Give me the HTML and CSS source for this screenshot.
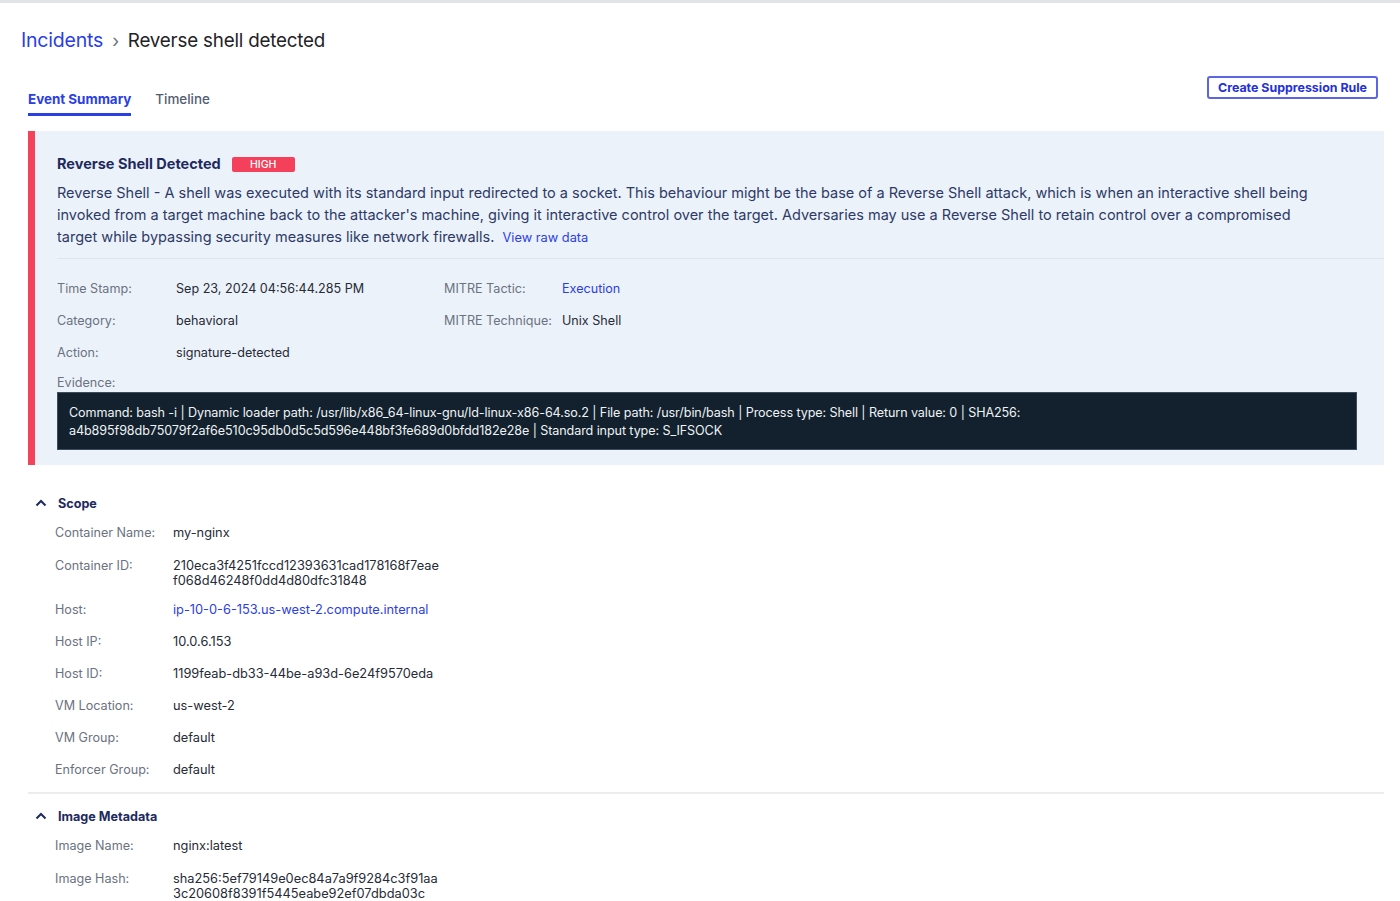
FILE: index.html
```html
<!DOCTYPE html>
<html>
  <head>
    <title>Reverse shell detected</title>
    <link rel="stylesheet" href="styles.css">
  </head>
  <body>
    <div class="page">
      <div class="breadcrumb">
        <a class="crumb-link" href="#">Incidents</a>
        <span class="crumb-sep">&rsaquo;</span>
        <span class="crumb-current">Reverse shell detected</span>
      </div>

      <div class="tabs-row">
        <div class="tabs">
          <div class="tab active">Event Summary</div>
          <div class="tab">Timeline</div>
        </div>
        <button class="outline-button">Create Suppression Rule</button>
      </div>

      <div class="alert">
        <div class="alert-title">
          Reverse Shell Detected
          <span class="badge-high">HIGH</span>
        </div>
        <p class="alert-desc">
          Reverse Shell - A shell was executed with its standard input redirected to a socket. This behaviour might be the base of a Reverse Shell attack, which is when an interactive shell being invoked from a target machine back to the attacker's machine, giving it interactive control over the target. Adversaries may use a Reverse Shell to retain control over a compromised target while bypassing security measures like network firewalls.
          <a class="raw-link" href="#">View raw data</a>
        </p>
        <div class="alert-divider"></div>

        <div class="details">
          <div class="label">Time Stamp:</div>
          <div class="value">Sep 23, 2024 04:56:44.285 PM</div>
          <div class="label">MITRE Tactic:</div>
          <div class="value link">Execution</div>

          <div class="label">Category:</div>
          <div class="value">behavioral</div>
          <div class="label">MITRE Technique:</div>
          <div class="value">Unix Shell</div>

          <div class="label">Action:</div>
          <div class="value">signature-detected</div>
          <div></div>
          <div></div>
        </div>

        <div class="evidence-label">Evidence:</div>
        <div class="evidence">
          Command: bash -i | Dynamic loader path: /usr/lib/x86_64-linux-gnu/ld-linux-x86-64.so.2 | File path: /usr/bin/bash | Process type: Shell | Return value: 0 | SHA256: a4b895f98db75079f2af6e510c95db0d5c5d596e448bf3fe689d0bfdd182e28e | Standard input type: S_IFSOCK
        </div>
      </div>

      <div class="section first">
        <div class="section-head">
          <svg class="chevron" width="12" height="8" viewBox="0 0 12 8"><path d="M1.5 6.5 L6 2 L10.5 6.5" fill="none" stroke="#1e2a5e" stroke-width="2"/></svg>
          <span>Scope</span>
        </div>
        <div class="rows">
          <div class="row"><div class="row-label">Container Name:</div><div class="row-value">my-nginx</div></div>
          <div class="row multi"><div class="row-label">Container ID:</div><div class="row-value">210eca3f4251fccd12393631cad178168f7eae<br>f068d46248f0dd4d80dfc31848</div></div>
          <div class="row"><div class="row-label">Host:</div><div class="row-value link">ip-10-0-6-153.us-west-2.compute.internal</div></div>
          <div class="row"><div class="row-label">Host IP:</div><div class="row-value">10.0.6.153</div></div>
          <div class="row"><div class="row-label">Host ID:</div><div class="row-value">1199feab-db33-44be-a93d-6e24f9570eda</div></div>
          <div class="row"><div class="row-label">VM Location:</div><div class="row-value">us-west-2</div></div>
          <div class="row"><div class="row-label">VM Group:</div><div class="row-value">default</div></div>
          <div class="row"><div class="row-label">Enforcer Group:</div><div class="row-value">default</div></div>
        </div>
      </div>

      <div class="section">
        <div class="section-head">
          <svg class="chevron" width="12" height="8" viewBox="0 0 12 8"><path d="M1.5 6.5 L6 2 L10.5 6.5" fill="none" stroke="#1e2a5e" stroke-width="2"/></svg>
          <span>Image Metadata</span>
        </div>
        <div class="rows">
          <div class="row"><div class="row-label">Image Name:</div><div class="row-value">nginx:latest</div></div>
          <div class="row multi"><div class="row-label">Image Hash:</div><div class="row-value">sha256:5ef79149e0ec84a7a9f9284c3f91aa<br>3c20608f8391f5445eabe92ef07dbda03c</div></div>
        </div>
      </div>
    </div>
  </body>
</html>
```

FILE: styles.css
```css
body {
  margin: 0;
  font-family: Inter, "Noto Sans", sans-serif;
  background-color: #ffffff;
  color: #262b36;
  border-top: 3px solid #e3e4e6;
}
.page {
  padding: 0 16px 0 28px;
}

.breadcrumb {
  display: flex;
  align-items: center;
  margin-left: -7px;
  padding-top: 25px;
  height: 24px;
  font-size: 19.5px;
  letter-spacing: -0.2px;
}
.crumb-link {
  color: #2b3ee6;
  text-decoration: none;
}
.crumb-sep {
  color: #6b7280;
  font-size: 18px;
  margin: 0 9px 0 9px;
}
.crumb-current {
  color: #1f2328;
  font-size: 18.8px;
}

.tabs-row {
  display: flex;
  justify-content: space-between;
  align-items: flex-start;
  margin-top: 24px;
}
.tabs {
  display: flex;
  gap: 24px;
  margin-top: 15px;
}
.tab {
  font-size: 13.4px;
  font-weight: 500;
  color: #525d73;
  padding-bottom: 6px;
  border-bottom: 3px solid transparent;
}
.tab.active {
  font-weight: 700;
  color: #2b3ee6;
  border-bottom-color: #2b3ee6;
}
.outline-button {
  margin-right: 6px;
  height: 23px;
  padding: 0 9px;
  background-color: #ffffff;
  border: 2px solid #5c65e6;
  border-radius: 3px;
  font-family: Inter, sans-serif;
  font-size: 12.4px;
  font-weight: 700;
  color: #2430d8;
  cursor: pointer;
}

.alert {
  margin-top: 15px;
  background-color: #ecf2fa;
  border-left: 7px solid #f2435b;
  padding: 23px 27px 15px 22px;
}
.alert-title {
  display: flex;
  align-items: center;
  font-size: 14.5px;
  font-weight: 700;
  color: #1e2a5e;
  line-height: 20px;
}
.badge-high {
  margin-left: 11px;
  width: 63px;
  height: 15px;
  line-height: 15px;
  text-align: center;
  background-color: #f4405a;
  color: #ffffff;
  font-size: 10.5px;
  font-weight: 500;
  border-radius: 2px;
}
.alert-desc {
  margin: 8px 37px 0 0;
  font-size: 14.5px;
  line-height: 22px;
  color: #2d3a66;
}
.raw-link {
  color: #2b3ee6;
  text-decoration: none;
  font-size: 12.8px;
  margin-left: 4px;
}
.alert-divider {
  height: 1px;
  background-color: #dde5f0;
  margin: 9px -27px 0 0;
}

.details {
  display: grid;
  grid-template-columns: 119px 268px 118px auto;
  grid-auto-rows: 32px;
  align-items: center;
  margin-top: 13px;
  font-size: 12.6px;
}
.label {
  color: #6b7280;
}
.value {
  color: #262b36;
}
.link {
  color: #2b3ee6;
}
.evidence-label {
  margin-top: 6px;
  line-height: 18px;
  font-size: 12.6px;
  color: #6b7280;
}
.evidence {
  background-color: #12212d;
  border: 1px solid #3b4e5b;
  color: #eef2f5;
  font-size: 12.6px;
  line-height: 18px;
  padding: 11px 12px 9px 11px;
  letter-spacing: -0.1px;
}

.section {
  padding: 12px 0 6px 0;
}
.section.first {
  margin-top: 14px;
  padding-top: 14px;
  border-bottom: 2px solid #ececee;
}
.section-head {
  display: flex;
  align-items: center;
  height: 20px;
  padding-left: 7px;
  font-size: 12.6px;
  font-weight: 700;
  color: #1e2a5e;
}
.chevron {
  margin-right: 11px;
}
.rows {
  margin-top: 4px;
  font-size: 12.8px;
}
.row {
  display: flex;
  padding: 8px 0;
  line-height: 16px;
}
.row.multi {
  padding-top: 9px;
  padding-bottom: 6px;
}
.row-label {
  width: 118px;
  padding-left: 27px;
  font-size: 12.6px;
  color: #6b7280;
}
.row-value {
  color: #262b36;
  line-height: 15px;
}
.row-value.link {
  color: #2b3ee6;
}
```
